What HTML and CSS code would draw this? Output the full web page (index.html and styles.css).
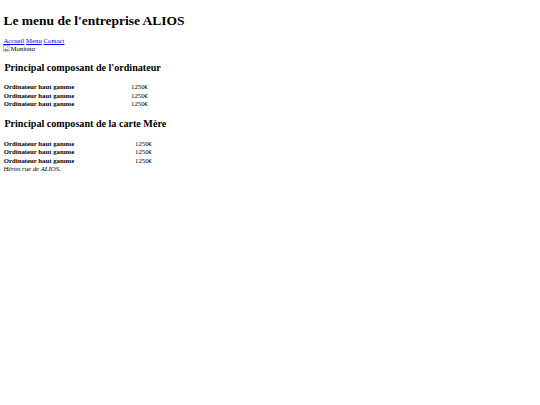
FILE: index.html
```html
<!DOCTYPE html>
<html lang="fr">
<head>
<meta charset="utf-8">
<title>ALIOS</title>
<link rel="stylesheet" href="styles.css">
</head>
<body class="page">
<header class="top">
<h1 class="title">Le menu de l'entreprise ALIOS</h1>
<nav class="nav"><a href="#" class="link">Accueil</a> <a href="#" class="link">Menu</a> <a href="#" class="link">Contact</a></nav>
<div class="img-alt"><svg class="broken" width="7" height="7" viewBox="0 0 8 8"><rect x="0.5" y="0.5" width="6.5" height="6.5" fill="#fff" stroke="#9aa0a6" stroke-width="0.8"/><path d="M1 6.5 L3 3.8 L4.6 5.3 L5.6 4.3 L6.8 6.5 Z" fill="#3ba55c"/><circle cx="5" cy="2.3" r="0.8" fill="#e0a030"/></svg><span class="alt-text">Moniteur</span></div>
</header>
<main class="content">
<h2 class="sub">Principal composant de l'ordinateur</h2>
<table class="prices prices-a">
<tr><th class="name">Ordinateur haut gamme</th><td class="price">1250€</td></tr>
<tr><th class="name">Ordinateur haut gamme</th><td class="price">1250€</td></tr>
<tr><th class="name">Ordinateur haut gamme</th><td class="price">1250€</td></tr>
</table>
<h2 class="sub">Principal composant de la carte Mère</h2>
<table class="prices prices-b">
<tr><th class="name">Ordinateur haut gamme</th><td class="price">1250€</td></tr>
<tr><th class="name">Ordinateur haut gamme</th><td class="price">1250€</td></tr>
<tr><th class="name">Ordinateur haut gamme</th><td class="price">1250€</td></tr>
</table>
</main>
<footer class="foot"><address class="addr">Héron rue de ALIOS.</address></footer>
</body>
</html>
```
FILE: styles.css
```css
html { background: #fff; }
.page {
  margin: 3.375px;
  font-family: "Liberation Serif", "Times New Roman", serif;
  font-size: 6.75px;
  line-height: 7.6px;
  color: #000;
}
.title {
  font-size: 13.5px;
  line-height: 15.6px;
  font-weight: bold;
  margin: 9.5px 0 8.6px;
}
.nav { line-height: 7.6px; }
.link { color: #0000ee; text-decoration: underline; }
.img-alt {
  display: flex;
  align-items: center;
  height: 7.6px;
}
.broken { flex: none; margin-top: -0.5px; }
.alt-text { line-height: 7.6px; }
.sub {
  font-size: 10.125px;
  line-height: 12.2px;
  font-weight: bold;
  margin: 9.5px 0 9px;
  padding-left: 1px;
}
.prices {
  border-collapse: separate;
  border-spacing: 0.84px;
  font-size: 6.75px;
}
.prices th, .prices td { padding: 0.42px; line-height: 7.7px; }
.name { text-align: left; font-weight: bold; }
.prices-a .name { width: 126.5px; }
.prices-b .name { width: 130.5px; }
.addr { font-style: italic; line-height: 7.6px; }
```
